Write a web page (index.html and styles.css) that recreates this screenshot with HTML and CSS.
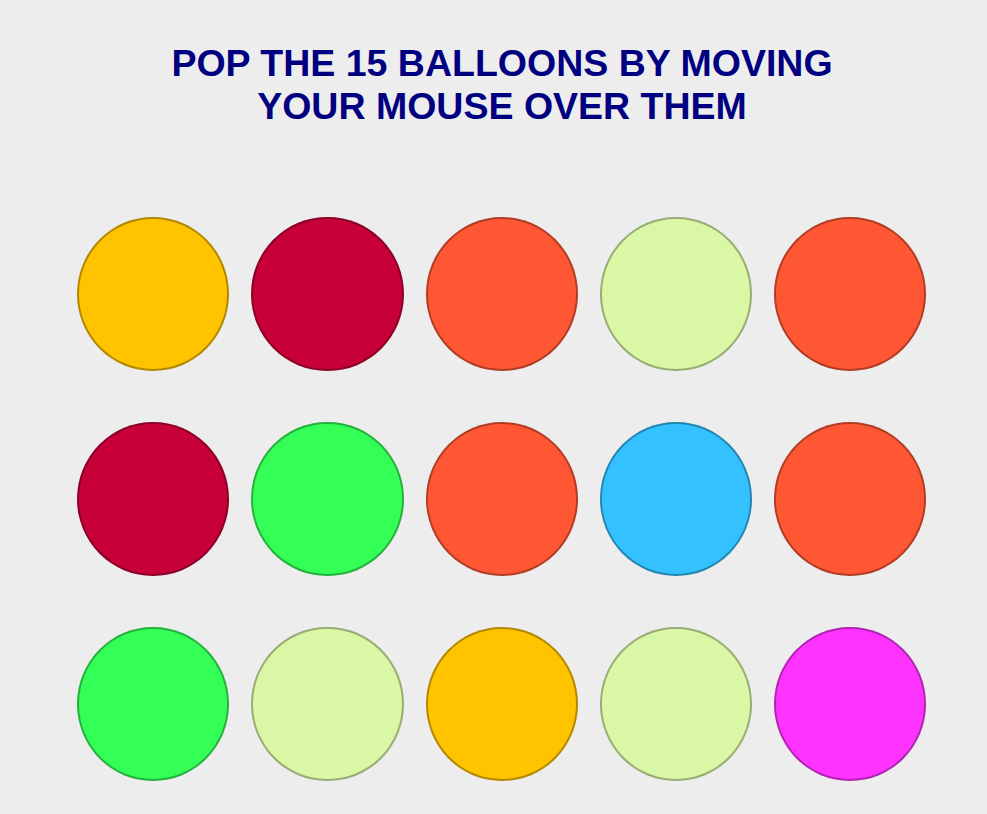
FILE: index.html
```html
<!DOCTYPE html>
<html>
<head>
<meta charset="utf-8">
<link rel="stylesheet" href="styles.css">
</head>
<body>
<div class="game">
  <h1 class="title">POP THE 15 BALLOONS BY MOVING<br>YOUR MOUSE OVER THEM</h1>
  <div class="balloons">
    <div class="balloon yellow"></div>
    <div class="balloon crimson"></div>
    <div class="balloon orange"></div>
    <div class="balloon lime"></div>
    <div class="balloon orange"></div>
    <div class="balloon crimson"></div>
    <div class="balloon green"></div>
    <div class="balloon orange"></div>
    <div class="balloon blue"></div>
    <div class="balloon orange"></div>
    <div class="balloon green"></div>
    <div class="balloon lime"></div>
    <div class="balloon yellow"></div>
    <div class="balloon lime"></div>
    <div class="balloon magenta"></div>
  </div>
</div>
</body>
</html>
```
FILE: styles.css
```css
html, body {
  margin: 0;
  padding: 0;
  background: #ededed;
}
body {
  font-family: "Liberation Sans", Arial, sans-serif;
}
.game {
  width: 850px;
  margin-left: 77px;
  padding-top: 42px;
}
.title {
  margin: 0;
  text-align: center;
  font-size: 37.5px;
  line-height: 42.5px;
  font-weight: bold;
  color: #000080;
}
.balloons {
  margin-top: 90px;
  display: grid;
  grid-template-columns: repeat(5, 152.25px);
  column-gap: 22px;
  row-gap: 51px;
}
.balloon {
  width: 152.25px;
  height: 154px;
  box-sizing: border-box;
  border-radius: 50%;
  border: 2px solid rgba(0, 0, 0, 0.3);
}
.yellow { background: #ffc300; }
.crimson { background: #c70039; }
.orange { background: #ff5733; }
.lime { background: #daf7a6; }
.green { background: #33ff57; }
.blue { background: #33c1ff; }
.magenta { background: #ff33ff; }
```
